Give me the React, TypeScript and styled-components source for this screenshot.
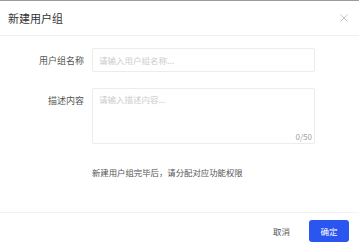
import styled, { createGlobalStyle } from "styled-components";

const Global = createGlobalStyle`
    html, body {
        margin: 0;
        padding: 0;
        background: #ffffff;
    }
    * {
        box-sizing: border-box;
    }
`;

const Style = {
    Dialog: styled.div`
        width: 359px;
        height: 249px;
        display: flex;
        flex-direction: column;
        background: #ffffff;
        border-top: 1px solid #9a9a9a;
        font-family: "Noto Sans CJK SC", "Noto Sans", sans-serif;
    `,
    Header: styled.div`
        height: 35px;
        display: flex;
        justify-content: space-between;
        align-items: center;
        padding: 0 10px 0 8px;
        border-bottom: 1px solid #f0f0f0;
    `,
    Title: styled.div`
        font-size: 11px;
        color: #333333;
    `,
    Close: styled.button`
        border: none;
        background: none;
        padding: 0;
        width: 10px;
        height: 10px;
        display: flex;
        cursor: pointer;
    `,
    Body: styled.div`
        flex: 1;
        display: flex;
        flex-direction: column;
        padding: 12px 44px 0 0;
        gap: 16px;
    `,
    Row: styled.div`
        display: flex;
        align-items: flex-start;
    `,
    Label: styled.div<{ top: number }>`
        width: 92px;
        text-align: right;
        padding-right: 8px;
        padding-top: ${({ top }) => top}px;
        font-size: 9px;
        color: #555555;
    `,
    Input: styled.div`
        flex: 1;
        height: 24px;
        display: flex;
        align-items: center;
        padding-left: 6px;
        border: 1px solid #ececec;
        border-radius: 2px;
        font-size: 8.5px;
        color: #cccccc;
    `,
    TextArea: styled.div`
        flex: 1;
        height: 56px;
        position: relative;
        padding: 4px 6px;
        border: 1px solid #ececec;
        border-radius: 2px;
        font-size: 8.5px;
        color: #cccccc;
    `,
    Counter: styled.span`
        position: absolute;
        right: 2px;
        bottom: 1px;
        font-size: 8px;
        color: #a0a0a0;
    `,
    Hint: styled.div`
        padding-left: 92px;
        margin-top: 6px;
        font-size: 8.4px;
        color: #555555;
    `,
    Footer: styled.div`
        height: 37px;
        border-top: 1px solid #f2f2f2;
        display: flex;
        justify-content: flex-end;
        align-items: center;
        gap: 19px;
        padding: 0 10px 0 0;
    `,
    Cancel: styled.button`
        border: none;
        background: none;
        padding: 0;
        font-family: inherit;
        font-size: 8.5px;
        color: #555555;
        cursor: pointer;
    `,
    Confirm: styled.button`
        width: 40px;
        height: 22px;
        border: none;
        border-radius: 3px;
        background: #2b55f0;
        color: #ffffff;
        font-family: inherit;
        font-size: 8.5px;
        cursor: pointer;
    `,
};

export default function App() {
    return (
        <>
            <Global />
            <Style.Dialog>
                {/* 头部 */}
                <Style.Header>
                    <Style.Title>新建用户组</Style.Title>
                    <Style.Close>
                        <svg width="10" height="10" viewBox="0 0 10 10">
                            <path d="M1.5 1.5 L8.5 8.5 M8.5 1.5 L1.5 8.5" stroke="#c4c4c4" strokeWidth="1" />
                        </svg>
                    </Style.Close>
                </Style.Header>

                {/* 表单 */}
                <Style.Body>
                    <Style.Row>
                        <Style.Label top={6}>用户组名称</Style.Label>
                        <Style.Input>请输入用户组名称...</Style.Input>
                    </Style.Row>
                    <Style.Row>
                        <Style.Label top={6}>描述内容</Style.Label>
                        <Style.TextArea>
                            请输入描述内容...
                            <Style.Counter>0/50</Style.Counter>
                        </Style.TextArea>
                    </Style.Row>
                    <Style.Hint>新建用户组完毕后，请分配对应功能权限</Style.Hint>
                </Style.Body>

                {/* 底部按钮 */}
                <Style.Footer>
                    <Style.Cancel>取消</Style.Cancel>
                    <Style.Confirm>确定</Style.Confirm>
                </Style.Footer>
            </Style.Dialog>
        </>
    );
}
